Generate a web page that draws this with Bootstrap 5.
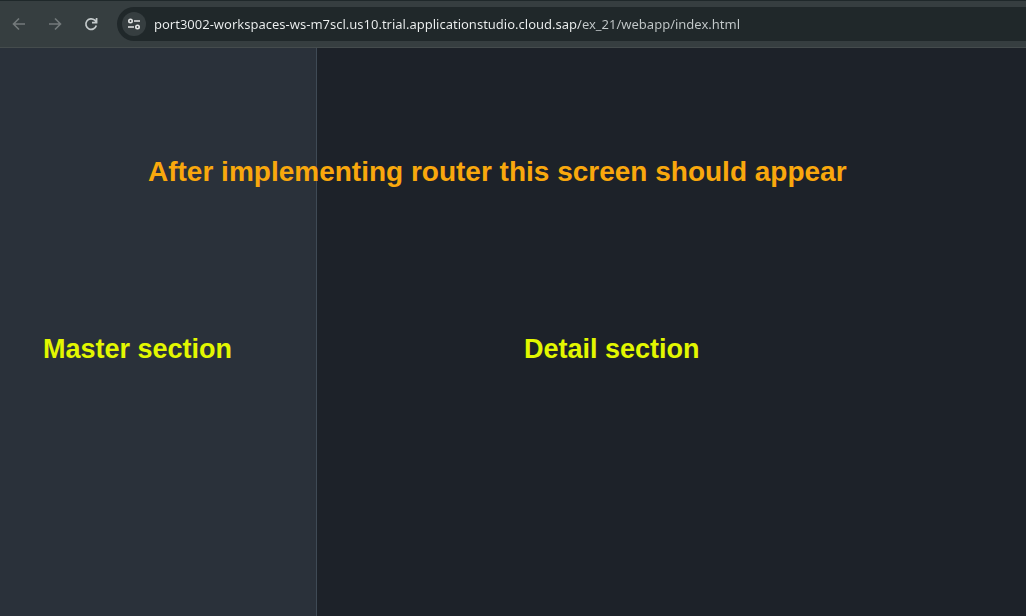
<!DOCTYPE html>
<html lang="en">
<head>
<meta charset="utf-8">
<meta name="viewport" content="width=device-width, initial-scale=1">
<title>ex_21</title>
<link href="https://cdn.jsdelivr.net/npm/bootstrap@5.3.0/dist/css/bootstrap.min.css" rel="stylesheet">
<style>
body { background: #1d2229; font-family: "Liberation Sans", Arial, sans-serif; }
.toolbar { background: #363e40; border-top: 1px solid #1f282a; border-bottom: 1px solid #454c4d; height: 48px; }
.tool-nav { padding: 0 16px 0 9px; }
.tool-btn { width: 20px; height: 20px; color: #c5cbcc; line-height: 0; }
.tool-btn:disabled { color: #747a7b; border: 0; opacity: 1; }
.address { background: #20282a; height: 34px; border-radius: 17px 0 0 17px; padding-left: 5px; }
.site-info { width: 24px; height: 24px; background: #363e40; color: #e3e5e5; line-height: 0; }
.url {
  font: 13px/20px "Noto Sans", "Segoe UI", sans-serif;
  color: transparent;
  background: linear-gradient(90deg, #eef1f1 426px, #c4cacb 426px);
  -webkit-background-clip: text;
  background-clip: text;
  outline: 0;
}
.master { flex: 0 0 317px; background: #2a313a; border-right: 1px solid #3f4a55; padding-left: 43px; }
.detail { padding-left: 207px; }
.pane-title { color: #e3f700; font-size: 27px; line-height: 32px; font-weight: 700; margin-top: 285px; }
.notice { color: #f9a80d; font-size: 28px; line-height: 32px; font-weight: 700; top: 108px; left: 148px; }
</style>
</head>
<body class="d-flex flex-column min-vh-100">
<header class="toolbar d-flex align-items-center">
  <nav class="tool-nav d-flex align-items-center gap-3" aria-label="Browser">
    <button class="tool-btn btn p-0 border-0" type="button" aria-label="Back" disabled>
      <svg width="20" height="20" viewBox="0 0 20 20" fill="none" stroke="currentColor" stroke-width="1.6"><path d="M16 10H5M10 4.500 4.500 10l5.500 5.500"/></svg>
    </button>
    <button class="tool-btn btn p-0 border-0" type="button" aria-label="Forward" disabled>
      <svg width="20" height="20" viewBox="0 0 20 20" fill="none" stroke="currentColor" stroke-width="1.6"><path d="M4 10h11M10 4.500 15.500 10 10 15.500"/></svg>
    </button>
    <button class="tool-btn btn p-0 border-0" type="button" aria-label="Reload">
      <svg width="20" height="20" viewBox="0 0 20 20" fill="none" stroke="currentColor" stroke-width="1.700"><path d="M15.300 11.500A5.300 5.300 0 1 1 13.800 6.200L15.500 8M15.600 4v4.600H11"/></svg>
    </button>
  </nav>
  <div class="address d-flex align-items-center flex-grow-1">
    <button class="site-info btn rounded-circle border-0 p-0 flex-shrink-0" type="button" aria-label="View site information">
      <svg width="24" height="24" viewBox="0 0 24 24" fill="none" stroke="currentColor" stroke-width="1.6"><circle cx="8.500" cy="9" r="1.700"/><path d="M12 9h6M6 15h6"/><circle cx="15.500" cy="15" r="1.700"/></svg>
    </button>
    <input class="url border-0 flex-grow-1 p-0 ms-2" type="text" aria-label="Address" value="port3002-workspaces-ws-m7scl.us10.trial.applicationstudio.cloud.sap/ex_21/webapp/index.html">
  </div>
</header>
<main class="position-relative d-flex flex-grow-1">
  <section class="master"><h2 class="pane-title mb-0">Master section</h2></section>
  <section class="detail flex-grow-1"><h2 class="pane-title mb-0">Detail section</h2></section>
  <h1 class="notice position-absolute text-nowrap mb-0">After implementing router this screen should appear</h1>
</main>
<script src="https://cdn.jsdelivr.net/npm/bootstrap@5.3.0/dist/js/bootstrap.bundle.min.js"></script>
</body>
</html>
